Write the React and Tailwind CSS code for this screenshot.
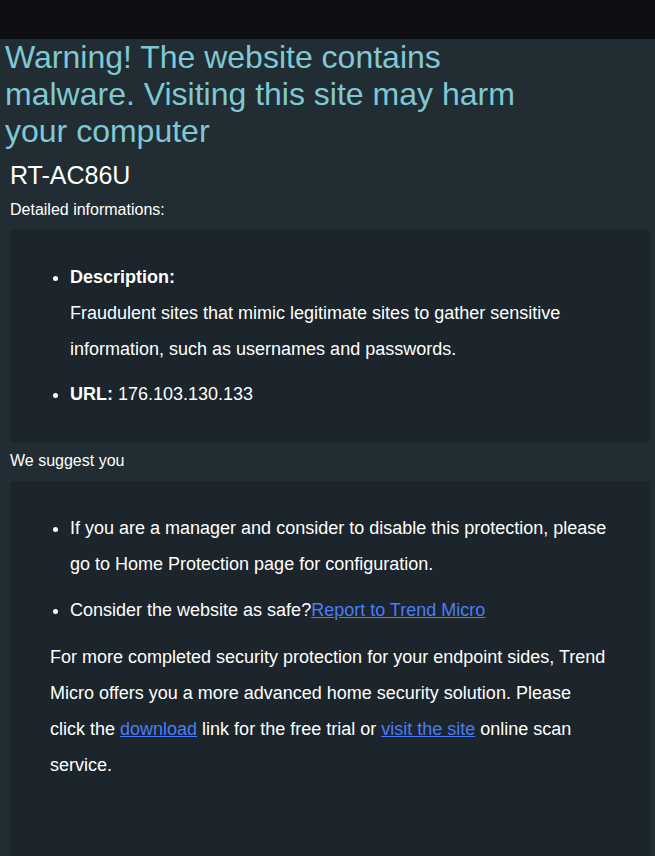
export default function App() {
  const font = { fontFamily: '"Liberation Sans", Arial, sans-serif' };
  return (
    <div className="min-h-[856px] bg-[#212d33] text-white" style={font}>
      <div className="h-[39px] bg-[#0d0f12]" />
      <h1 className="w-[540px] pl-[5px] text-[32px] leading-[37px] text-[#7fc8d4]">
        Warning! The website contains malware. Visiting this site may harm your computer
      </h1>
      <div className="pl-[10px] pr-[5px]">
        <div className="mt-[10px] text-[25px] leading-[30px]">RT-AC86U</div>
        <div className="mt-[10px] text-[16px] leading-[20px]">Detailed informations:</div>
        <div className="mt-[10px] rounded-[4px] bg-[#1b252b] pl-[40px] pr-[41px] pt-[29px] pb-[30px] text-[18px] leading-[36px]">
          <ul className="list-disc pl-[20px]">
            <li className="mb-[9px]">
              <b>Description:</b>
              <br />
              Fraudulent sites that mimic legitimate sites to gather sensitive information, such as usernames and passwords.
            </li>
            <li>
              <b>URL:</b> 176.103.130.133
            </li>
          </ul>
        </div>
        <div className="mt-[9px] text-[16px] leading-[20px]">We suggest you</div>
        <div className="mt-[10px] min-h-[400px] rounded-[4px] bg-[#1b252b] pl-[40px] pr-[41px] pt-[29px] pb-[60px] text-[18px] leading-[36px]">
          <ul className="list-disc pl-[20px]">
            <li className="mb-[10px]">
              If you are a manager and consider to disable this protection, please go to Home Protection page for configuration.
            </li>
            <li>
              Consider the website as safe?
              <a href="#" className="text-[#4a7df7] underline">Report to Trend Micro</a>
            </li>
          </ul>
          <p className="mt-[11px]">
            For more completed security protection for your endpoint sides, Trend Micro offers you a more advanced home security solution. Please click the{" "}
            <a href="#" className="text-[#4a7df7] underline">download</a> link for the free trial or{" "}
            <a href="#" className="text-[#4a7df7] underline">visit the site</a> online scan service.
          </p>
        </div>
      </div>
    </div>
  );
}
